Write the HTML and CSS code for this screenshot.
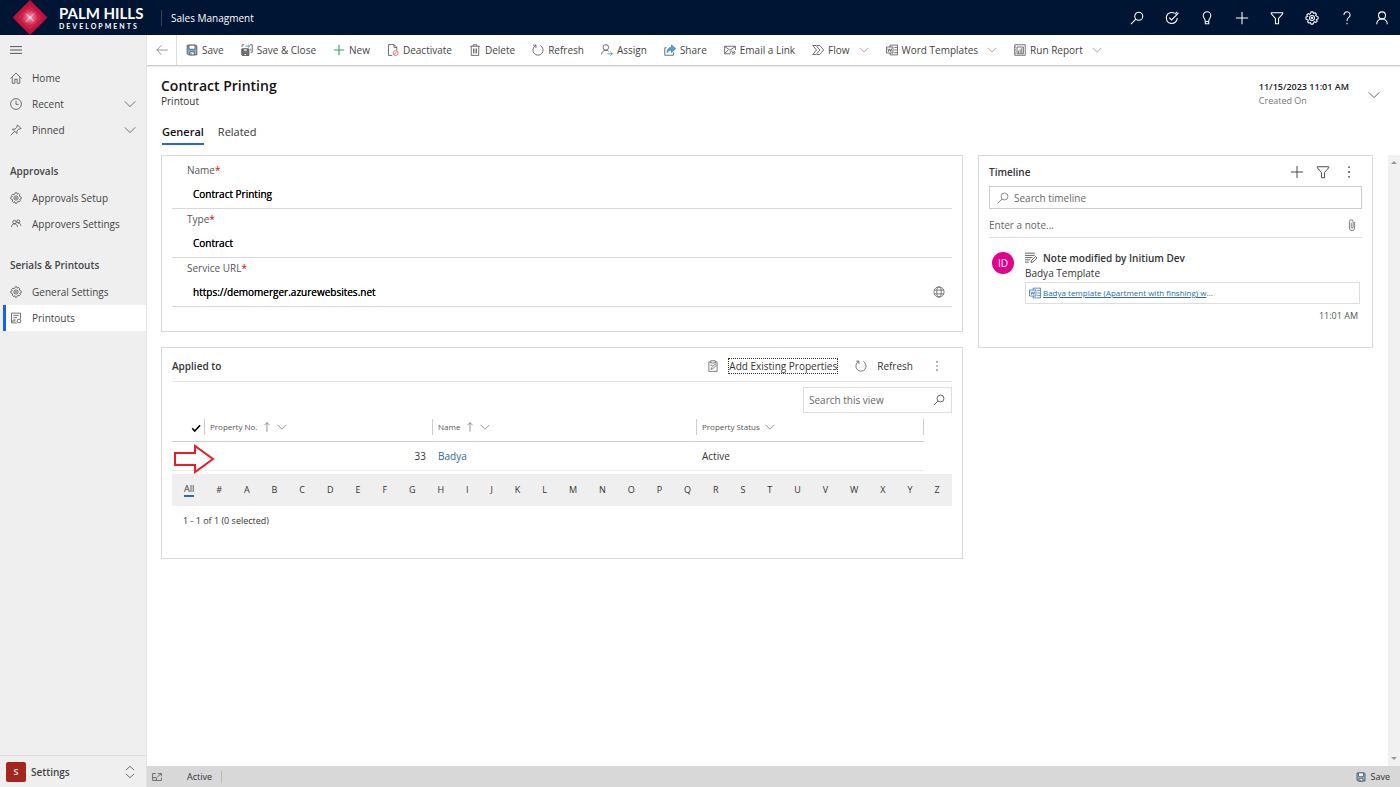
FILE: index.html
```html
<!DOCTYPE html>
<html lang="en">

<head>
    <meta charset="UTF-8">
    <meta name="viewport" content="width=device-width, initial-scale=1.0">
    <title>Contract Printing - Sales Managment</title>
    <link rel="stylesheet" href="styles.css">
</head>

<body>
    <!-- Shared icons -->
    <svg class="sprite" aria-hidden="true">
        <symbol id="i-search" viewBox="0 0 16 16"><circle cx="10" cy="6" r="4.6"/><path d="M6.7 9.3 1 15"/></symbol>
        <symbol id="i-target" viewBox="0 0 16 16"><path d="M11 2.600A6.300 6.300 0 1 0 14 8"/><path d="M4.800 7.500 7.500 10.200 14.500 3.200M11.500 3.500 14 1M12.500 5 15.500 2"/></symbol>
        <symbol id="i-bulb" viewBox="0 0 16 16"><path d="M6 11.500C6 9 3.700 8 3.700 5.200a4.300 4.300 0 0 1 8.600 0C12.300 8 10 9 10 11.500v3H6zM6 12h4"/></symbol>
        <symbol id="i-plus" viewBox="0 0 16 16"><path d="M8 1v14M1 8h14"/></symbol>
        <symbol id="i-filter" viewBox="0 0 16 16"><path d="M1.500 2h13v1.200L9.800 8.500v6H6.200v-6L1.500 3.200z"/></symbol>
        <symbol id="i-gear" viewBox="0 0 16 16"><path d="M6.300 2.900 7 1h2l.7 1.900 1.800-.9 1.500 1.500-.8 1.800L15 7v2l-2 .7.900 1.800-1.500 1.500-1.800-.8L9 15H7l-.7-2-1.800.9L3 12.400l.8-1.800L1 9V7l2-.7-.9-1.800L3.600 3l1.800.8z"/><circle cx="8" cy="8" r="2.800"/><circle cx="8" cy="8" r=".7"/></symbol>
        <symbol id="i-help" viewBox="0 0 16 16"><path d="M4.500 4.500A3.500 3.500 0 1 1 10 7.300C8.600 8.300 8 9 8 11.500M8 13.500V15"/></symbol>
        <symbol id="i-user" viewBox="0 0 16 16"><circle cx="8" cy="5" r="4"/><path d="M2 15c0-3.500 2.500-6 6-6s6 2.500 6 6"/></symbol>
        <symbol id="i-menu" viewBox="0 0 16 16"><path d="M0 3.500h16M0 8h16M0 12.500h16"/></symbol>
        <symbol id="i-home" viewBox="0 0 16 16"><path d="M.8 8.500 8 1.500l7.200 7M3 7v8h3.500V9.500h3V15H13V7"/></symbol>
        <symbol id="i-clock" viewBox="0 0 16 16"><circle cx="8" cy="8" r="7.200"/><path d="M8 3.500v5h3.500"/></symbol>
        <symbol id="i-pin" viewBox="0 0 16 16"><path d="M10 1.200 14.800 6l-3.300 1-2.300 2.300v3.500L3.200 6.800h3.500L9 4.500zM6 10l-5 5"/></symbol>
        <symbol id="i-people" viewBox="0 0 16 16"><circle cx="6" cy="5.500" r="2.300"/><circle cx="11" cy="4.500" r="2"/><path d="M2 12c0-2.500 1.700-4.200 4-4.200S10 9.500 10 12M10.500 6.500c2.500 0 3.800 1.500 4 4"/></symbol>
        <symbol id="i-printout" viewBox="0 0 16 16"><path d="M9 14.500H2v-13h12V9M4.500 4.500h7M4.500 7.500h5M4.500 10.500h3M2 12h5"/><circle cx="12" cy="12" r="2.500"/></symbol>
        <symbol id="i-down" viewBox="0 0 16 16"><path d="m1 4.500 7 7 7-7"/></symbol>
        <symbol id="i-updown" viewBox="0 0 16 16"><path d="M2.500 5.500 8 .5l5.500 5M2.500 10.500l5.500 5 5.500-5"/></symbol>
        <symbol id="i-back" viewBox="0 0 16 16"><path d="M15.500 8H1M7.500 1.500 1 8l6.500 6.500"/></symbol>
        <symbol id="i-save" viewBox="0 0 16 16"><path fill="#7fb2dc" d="M2 1.500h11.500l1 1v12H3l-1.500-1.500V1.500z"/><path fill="#fff" d="M4 1.500h8v5.500H4zM5 10.500h6v4H5z"/><path d="M7 12.500v2"/></symbol>
        <symbol id="i-saveclose" viewBox="0 0 16 16"><path fill="#777" d="M1 6.500h9.500v9H2.300L1 14.200z"/><path fill="#fff" d="M3 6.500h5.500v3H3zM4 12.500h3.500v3H4z"/><path d="M1.500 4V1H4M12 1h3v10h-2.500"/><path class="blue" d="M6 2.800h5.500M9.500 1l2 1.800-2 1.900M13 6v3"/></symbol>
        <symbol id="i-deactivate" viewBox="0 0 16 16"><path d="M7 15.300H2V.8h7.500L13 4.300v4M9.300.8v3.700H13"/><circle class="red" cx="11.500" cy="12" r="3.300"/><path class="red" d="m9.300 14.200 4.400-4.400"/></symbol>
        <symbol id="i-trash" viewBox="0 0 16 16"><path d="M1.500 3h13M5.500 3V1h5v2M3 3v12.200h10V3M6 6v6.500M8 6v6.500M10 6v6.500"/></symbol>
        <symbol id="i-refresh" viewBox="0 0 16 16"><path d="M5 2A6.800 6.800 0 1 0 11 2M1.500 1.500H5.300V5.500"/></symbol>
        <symbol id="i-assign" viewBox="0 0 16 16"><circle cx="6.500" cy="4.500" r="3.700"/><path d="M.8 14c0-3.200 2.300-5.600 5.700-5.600 1.600 0 2.800.5 3.700 1.300"/><path class="blue" d="M8.500 13H15M12.500 10.500 15.200 13l-2.700 2.500"/></symbol>
        <symbol id="i-share" viewBox="0 0 16 16"><path d="M3.500 5H1v10h11.500v-4"/><path fill="#5b9fdc" class="blue" d="M4 11.500C4 7 6.500 4.500 10 4.500V1.200l5.500 5-5.500 5V8C7.500 8 5.500 9 4 11.500z"/></symbol>
        <symbol id="i-mail" viewBox="0 0 16 16"><path d="M8 13H.8V3h14.400v5M1 3.300l7 5 7-5M1 12.800l4.500-5"/><path d="M9.500 13a2 2 0 0 1 0-3.500h2M12.500 9.500a2 2 0 0 1 0 4h-1.500M10.500 11.500h3"/></symbol>
        <symbol id="i-flow" viewBox="0 0 16 16"><path d="M1 2h4.500l5 6-5 6H1l5-6zM6.500 2h4l5 6-5 6h-4"/></symbol>
        <symbol id="i-word" viewBox="0 0 16 16"><path d="M5.500 4V1.500h10v13h-10V12M11 4.500h4.500M11 8h4.500M11 11.500h4.500"/><path d="M.7 4h8.600v8H.7zM2.500 6l1 4L5 6.500 6.500 10l1-4"/></symbol>
        <symbol id="i-report" viewBox="0 0 16 16"><path d="M4 1h11v14H1V1zM4 4v9h8.500V4zM6 12V9M8.200 12V7M10.400 12V5.500M1 4h1.500M1 8h1.500M1 12h1.500"/></symbol>
        <symbol id="i-globe" viewBox="0 0 16 16"><circle cx="8" cy="8" r="6.800"/><ellipse cx="8" cy="8" rx="3" ry="6.800"/><path d="M1.700 5.500h12.600M1.700 10.500h12.600"/></symbol>
        <symbol id="i-clip" viewBox="0 0 16 16"><path d="M11.500 4v8a3.500 3.500 0 0 1-7 0V3.500a2.500 2.500 0 0 1 5 0V11a1.300 1.300 0 0 1-2.600 0V5"/></symbol>
        <symbol id="i-note" viewBox="0 0 16 16"><path d="M0 1.500h13M0 4.500h13M0 7.500h10M0 10.500h7M0 13.500h5M8 14l.7-2.700L14 6l2 2-5.300 5.300z"/></symbol>
        <symbol id="i-dots" viewBox="0 0 16 16"><path stroke-width="1.500" d="M7 2.500h2M7 8h2M7 13.500h2"/></symbol>
        <symbol id="i-add" viewBox="0 0 16 16"><path d="M5 2.500H2.500v12.700h11V2.500H11M5 1h6v3H5zM5.500 12.500l.5-2.200L11 5.500l1.500 1.500-5 5zM4.500 7h3"/></symbol>
        <symbol id="i-check" viewBox="0 0 16 16"><path d="m2 8.500 4 4.500L14.500 3.500"/></symbol>
        <symbol id="i-up" viewBox="0 0 16 16"><path d="M8 15.500V1M4 5l4-4 4 4"/></symbol>
        <symbol id="i-popout" viewBox="0 0 16 16"><path d="M6 2.500H1v11h14V9M1 9h6v4.500M9 2.500h6V7M15 2.500 8.500 8"/></symbol>
    </svg>

    <header class="topbar">
        <a class="brand" href="#">
            <svg class="brand-mark" viewBox="0 0 36 36" aria-hidden="true">
                <defs>
                    <radialGradient id="glow">
                        <stop offset="0" stop-color="#fff"/>
                        <stop offset=".12" stop-color="#e77b93"/>
                        <stop offset=".45" stop-color="#cf1843"/>
                        <stop offset="1" stop-color="#a80f34"/>
                    </radialGradient>
                </defs>
                <path fill="url(#glow)" d="M18 0 36 18 18 36 0 18z"/>
                <path fill="none" stroke="#fff" stroke-opacity=".35" stroke-width=".7" stroke-dasharray="1 1" d="M18 7 29 18 18 29 7 18zM18 10l8 8-8 8-8-8zM18 13l5 5-5 5-5-5z"/>
                <path stroke="#fff" stroke-width=".7" d="m14 14 8 8M22 14l-8 8"/>
            </svg>
            <span class="brand-text">
                <span class="brand-name">PALM HILLS</span>
                <span class="brand-sub">DEVELOPMENTS</span>
            </span>
        </a>
        <span class="app-name">Sales Managment</span>
        <div class="top-actions">
            <button type="button" aria-label="Search"><svg class="icon"><use href="#i-search"/></svg></button>
            <button type="button" aria-label="Assistant"><svg class="icon"><use href="#i-target"/></svg></button>
            <button type="button" aria-label="Insights"><svg class="icon"><use href="#i-bulb"/></svg></button>
            <button type="button" aria-label="Quick create"><svg class="icon"><use href="#i-plus"/></svg></button>
            <button type="button" aria-label="Advanced find"><svg class="icon"><use href="#i-filter"/></svg></button>
            <button type="button" aria-label="Settings"><svg class="icon"><use href="#i-gear"/></svg></button>
            <button type="button" aria-label="Help"><svg class="icon"><use href="#i-help"/></svg></button>
            <button type="button" aria-label="Account"><svg class="icon"><use href="#i-user"/></svg></button>
        </div>
    </header>

    <div class="shell">
        <nav class="sidebar">
            <button type="button" class="menu-btn" aria-label="Toggle navigation"><svg class="icon"><use href="#i-menu"/></svg></button>
            <a class="nav-item" href="#"><svg class="icon"><use href="#i-home"/></svg>Home</a>
            <a class="nav-item" href="#"><svg class="icon"><use href="#i-clock"/></svg>Recent<svg class="icon nav-arrow"><use href="#i-down"/></svg></a>
            <a class="nav-item" href="#"><svg class="icon"><use href="#i-pin"/></svg>Pinned<svg class="icon nav-arrow"><use href="#i-down"/></svg></a>

            <h3 class="nav-title">Approvals</h3>
            <a class="nav-item" href="#"><svg class="icon"><use href="#i-gear"/></svg>Approvals Setup</a>
            <a class="nav-item" href="#"><svg class="icon"><use href="#i-people"/></svg>Approvers Settings</a>

            <h3 class="nav-title">Serials &amp; Printouts</h3>
            <a class="nav-item" href="#"><svg class="icon"><use href="#i-gear"/></svg>General Settings</a>
            <a class="nav-item active" href="#"><svg class="icon"><use href="#i-printout"/></svg>Printouts</a>

            <button type="button" class="area-switch">
                <span class="area-badge">S</span>Settings
                <svg class="icon nav-arrow"><use href="#i-updown"/></svg>
            </button>
        </nav>

        <div class="page">
            <div class="commands">
                <button type="button" class="back-btn" aria-label="Back"><svg class="icon"><use href="#i-back"/></svg></button>
                <div class="command-list">
                    <button type="button"><svg class="icon"><use href="#i-save"/></svg>Save</button>
                    <button type="button"><svg class="icon"><use href="#i-saveclose"/></svg>Save &amp; Close</button>
                    <button type="button"><svg class="icon green"><use href="#i-plus"/></svg>New</button>
                    <button type="button"><svg class="icon"><use href="#i-deactivate"/></svg>Deactivate</button>
                    <button type="button"><svg class="icon"><use href="#i-trash"/></svg>Delete</button>
                    <button type="button"><svg class="icon"><use href="#i-refresh"/></svg>Refresh</button>
                    <button type="button"><svg class="icon"><use href="#i-assign"/></svg>Assign</button>
                    <button type="button"><svg class="icon"><use href="#i-share"/></svg>Share</button>
                    <button type="button"><svg class="icon"><use href="#i-mail"/></svg>Email a Link</button>
                    <button type="button"><svg class="icon"><use href="#i-flow"/></svg>Flow<svg class="icon arrow"><use href="#i-down"/></svg></button>
                    <button type="button"><svg class="icon"><use href="#i-word"/></svg>Word Templates<svg class="icon arrow"><use href="#i-down"/></svg></button>
                    <button type="button"><svg class="icon"><use href="#i-report"/></svg>Run Report<svg class="icon arrow"><use href="#i-down"/></svg></button>
                </div>
            </div>

            <div class="record-header">
                <div>
                    <h1>Contract Printing</h1>
                    <div class="entity">Printout</div>
                </div>
                <div class="created">
                    <div class="created-value">11/15/2023 11:01 AM</div>
                    <div class="created-label">Created On</div>
                </div>
                <button type="button" class="expand-btn" aria-label="More header fields"><svg class="icon"><use href="#i-down"/></svg></button>
            </div>
            <div class="tabs" role="tablist">
                <button type="button" role="tab" aria-selected="true" class="tab selected">General</button>
                <button type="button" role="tab" aria-selected="false" class="tab">Related</button>
            </div>

            <div class="scroll-area">
                <main class="form">
                    <div class="column">
                        <section class="card fields">
                            <div class="field">
                                <label for="name">Name<span class="required">*</span></label>
                                <input type="text" id="name" value="Contract Printing">
                            </div>
                            <div class="field">
                                <label for="type">Type<span class="required">*</span></label>
                                <input type="text" id="type" value="Contract">
                            </div>
                            <div class="field">
                                <label for="url">Service URL<span class="required">*</span></label>
                                <div class="url-row">
                                    <input type="url" id="url" value="https://demomerger.azurewebsites.net">
                                    <svg class="icon"><use href="#i-globe"/></svg>
                                </div>
                            </div>
                        </section>

                        <section class="card applied">
                            <div class="applied-head">
                                <h2>Applied to</h2>
                                <button type="button" class="add-btn"><svg class="icon"><use href="#i-add"/></svg><span>Add Existing Properties</span></button>
                                <button type="button"><svg class="icon"><use href="#i-refresh"/></svg>Refresh</button>
                                <button type="button" aria-label="More commands"><svg class="icon"><use href="#i-dots"/></svg></button>
                            </div>
                            <div class="view-search">
                                <input type="text" placeholder="Search this view" aria-label="Search this view">
                                <svg class="icon"><use href="#i-search"/></svg>
                            </div>
                            <div class="grid-wrap">
                                <table>
                                    <thead>
                                        <tr>
                                            <th class="col-check"><svg class="icon"><use href="#i-check"/></svg></th>
                                            <th class="col-no"><span class="th">Property No.<svg class="icon"><use href="#i-up"/></svg><svg class="icon"><use href="#i-down"/></svg></span></th>
                                            <th class="col-name"><span class="th">Name<svg class="icon"><use href="#i-up"/></svg><svg class="icon"><use href="#i-down"/></svg></span></th>
                                            <th class="col-status"><span class="th last">Property Status<svg class="icon"><use href="#i-down"/></svg></span></th>
                                        </tr>
                                    </thead>
                                    <tbody>
                                        <tr>
                                            <td></td>
                                            <td class="number">33</td>
                                            <td><a href="#">Badya</a></td>
                                            <td>Active</td>
                                        </tr>
                                    </tbody>
                                </table>
                                <svg class="pointer" viewBox="0 0 42 30" aria-hidden="true"><path d="M2 9h20V2l18 13-18 13v-7H2z"/></svg>
                            </div>
                            <div class="jump-bar">
                                <button type="button" class="current">All</button>
                                <button type="button">#</button>
                                <button type="button">A</button>
                                <button type="button">B</button>
                                <button type="button">C</button>
                                <button type="button">D</button>
                                <button type="button">E</button>
                                <button type="button">F</button>
                                <button type="button">G</button>
                                <button type="button">H</button>
                                <button type="button">I</button>
                                <button type="button">J</button>
                                <button type="button">K</button>
                                <button type="button">L</button>
                                <button type="button">M</button>
                                <button type="button">N</button>
                                <button type="button">O</button>
                                <button type="button">P</button>
                                <button type="button">Q</button>
                                <button type="button">R</button>
                                <button type="button">S</button>
                                <button type="button">T</button>
                                <button type="button">U</button>
                                <button type="button">V</button>
                                <button type="button">W</button>
                                <button type="button">X</button>
                                <button type="button">Y</button>
                                <button type="button">Z</button>
                            </div>
                            <div class="paging">1 - 1 of 1 (0 selected)</div>
                        </section>
                    </div>

                    <section class="card timeline">
                        <div class="timeline-head">
                            <h2>Timeline</h2>
                            <button type="button" aria-label="Create record"><svg class="icon"><use href="#i-plus"/></svg></button>
                            <button type="button" aria-label="Filter"><svg class="icon"><use href="#i-filter"/></svg></button>
                            <button type="button" aria-label="More"><svg class="icon"><use href="#i-dots"/></svg></button>
                        </div>
                        <div class="timeline-search">
                            <svg class="icon"><use href="#i-search"/></svg>
                            <input type="text" placeholder="Search timeline" aria-label="Search timeline">
                        </div>
                        <div class="note-entry">
                            <input type="text" placeholder="Enter a note..." aria-label="Enter a note">
                            <svg class="icon"><use href="#i-clip"/></svg>
                        </div>
                        <article class="note">
                            <span class="avatar">ID</span>
                            <div class="note-body">
                                <div class="note-title"><svg class="icon"><use href="#i-note"/></svg>Note modified by Initium Dev</div>
                                <div class="note-text">Badya Template</div>
                                <div class="attachment"><svg class="icon"><use href="#i-word"/></svg><span><a href="#">Badya template (Apartment with finshing) w</a>...</span></div>
                                <div class="note-time">11:01 AM</div>
                            </div>
                        </article>
                    </section>
                </main>
                <div class="scrollbar"><i class="to-top"></i><i class="to-bottom"></i></div>
            </div>

            <footer class="statusbar">
                <button type="button" aria-label="Open in new window"><svg class="icon"><use href="#i-popout"/></svg></button>
                <span class="state">Active</span>
                <button type="button" class="footer-save"><svg class="icon"><use href="#i-save"/></svg>Save</button>
            </footer>
        </div>
    </div>
</body>

</html>
```
FILE: styles.css
```css
* {
    box-sizing: border-box;
}

body {
    margin: 0;
    min-height: 100vh;
    display: flex;
    flex-direction: column;
    font-family: "Open Sans", "Noto Sans", sans-serif;
    font-size: 10px;
    line-height: 16px;
    color: #333;
    background-color: #fff;
}

h1,
h2,
h3 {
    margin: 0;
    font-size: 10px;
    font-weight: 600;
}

a {
    color: inherit;
    text-decoration: none;
}

button,
input {
    font: inherit;
    color: inherit;
    background: none;
    border: none;
    padding: 0;
    min-width: 0;
}

button {
    display: flex;
    align-items: center;
    cursor: pointer;
    white-space: nowrap;
}

input {
    outline: none;
}

input::placeholder {
    color: #666;
    opacity: 1;
}

.sprite {
    display: none;
}

.icon {
    width: 12px;
    height: 12px;
    flex: none;
    fill: none;
    stroke: currentColor;
    stroke-width: 1;
}

.blue {
    stroke: #2b7cd3;
}

.red {
    stroke: #e8484f;
}

.green {
    color: #2fa866;
    stroke-width: 1.5;
}

/* Top bar */
.topbar {
    height: 35px;
    display: flex;
    align-items: center;
    background-color: #001433;
    color: #fff;
}

.brand {
    display: flex;
    align-items: center;
    gap: 11px;
    padding-left: 12px;
    width: 161px;
}

.brand-mark {
    width: 36px;
    height: 35px;
}

.brand-text {
    display: flex;
    flex-direction: column;
    font-family: Lato, sans-serif;
    font-weight: 700;
}

.brand-name {
    font-size: 15px;
    line-height: 17px;
}

.brand-sub {
    font-size: 7px;
    line-height: 9px;
    letter-spacing: 2px;
}

.app-name {
    border-left: 1px solid #33445f;
    padding-left: 9px;
}

.top-actions {
    display: flex;
    gap: 21px;
    margin-left: auto;
    padding-right: 11px;
}

.top-actions .icon {
    width: 14px;
    height: 14px;
    stroke-width: 1.2;
}

/* Layout */
.shell {
    flex: 1;
    display: flex;
}

.sidebar {
    width: 147px;
    flex: none;
    display: flex;
    flex-direction: column;
    background-color: #efefef;
    border-right: 1px solid #e4e4e4;
    color: #444;
}

.menu-btn {
    height: 30px;
    padding-left: 10px;
    color: #222;
}

.nav-item {
    display: flex;
    align-items: center;
    gap: 10px;
    height: 26px;
    padding: 0 10px;
    white-space: nowrap;
}

.nav-arrow {
    margin-left: auto;
}

.nav-title {
    height: 26px;
    line-height: 26px;
    margin: 15px 0 1px;
    padding-left: 10px;
}

.nav-item.active {
    background-color: #fff;
    box-shadow: inset 3px 0 #efefef, inset 6px 0 #0f62fe;
}

.area-switch {
    margin-top: auto;
    height: 32px;
    padding: 0 10px 0 6px;
    gap: 5px;
    border-top: 1px solid #dcdcdc;
    font-weight: 600;
}

.area-badge {
    width: 20px;
    height: 20px;
    line-height: 20px;
    border-radius: 2px;
    background-color: #a4261d;
    color: #fff;
    font-size: 9px;
}

.page {
    flex: 1;
    min-width: 0;
    display: flex;
    flex-direction: column;
}

/* Command bar */
.commands {
    height: 31px;
    display: flex;
    border-bottom: 1px solid #ccc;
    box-shadow: 0 1px 1px #eee;
    color: #444;
}

.back-btn {
    width: 30px;
    justify-content: center;
    border-right: 1px solid #ddd;
    color: #777;
}

.command-list {
    display: flex;
    gap: 17px;
    padding-left: 9px;
}

.command-list button {
    gap: 4px;
}

.command-list .arrow {
    width: 10px;
    height: 10px;
    margin-left: 5px;
    color: #777;
}

/* Record header */
.record-header {
    display: flex;
    align-items: center;
    padding: 10px 20px 0 14px;
}

h1 {
    font-size: 14px;
    line-height: 18px;
    color: #111;
}

.entity {
    line-height: 12px;
}

.created {
    margin-left: auto;
    padding-top: 4px;
    font-size: 9px;
    line-height: 14px;
}

.created-value {
    font-weight: 600;
    color: #222;
}

.created-label {
    color: #777;
}

.expand-btn {
    margin-left: 19px;
    padding-top: 5px;
}

.tabs {
    display: flex;
    gap: 14px;
    padding: 15px 15px 0;
    margin-bottom: 10px;
    font-size: 11px;
}

.tab {
    height: 22px;
    padding-bottom: 2px;
    border-bottom: 2px solid transparent;
}

.tab.selected {
    font-weight: 600;
    color: #111;
    border-bottom-color: #2266e3;
}

/* Form */
.scroll-area {
    flex: 1;
    display: flex;
}

.form {
    flex: 1;
    display: grid;
    grid-template-columns: 67fr 33fr;
    gap: 15px;
    align-items: start;
    padding: 0 15px 0 14px;
}

.column {
    display: grid;
    gap: 15px;
    min-width: 0;
}

.card {
    border: 1px solid #d8d8d8;
    min-width: 0;
}

.scrollbar {
    width: 12px;
    display: flex;
    flex-direction: column;
    align-items: center;
    justify-content: space-between;
    padding: 6px 0;
    background-color: #f1f1f1;
}

.to-top,
.to-bottom {
    border: 3px solid transparent;
}

.to-top {
    border-top-width: 0;
    border-bottom-color: #999;
}

.to-bottom {
    border-bottom-width: 0;
    border-top-color: #999;
}

.fields {
    padding: 4px 10px 24px;
}

.field {
    display: flex;
    flex-direction: column;
    height: 49px;
    padding-left: 15px;
    border-bottom: 1px solid #d8d8d8;
}

.field label {
    line-height: 20px;
    color: #555;
}

.required {
    color: #e00000;
}

.field input {
    flex: 1;
    padding-left: 6px;
    color: #000;
    text-shadow: 0 0 0 #000;
}

.url-row {
    flex: 1;
    display: flex;
    align-items: center;
    padding-right: 7px;
    color: #555;
}

/* Sub-grid */
.applied {
    padding: 0 10px 29px;
}

.applied-head {
    display: flex;
    align-items: center;
    height: 34px;
    gap: 18px;
    padding: 2px 9px 0 0;
    border-bottom: 1px solid #e4e4e4;
}

.applied-head h2 {
    margin-right: auto;
}

.applied-head button {
    gap: 10px;
}

.applied-head .icon {
    color: #555;
}

.add-btn span {
    line-height: 14px;
    outline: 1px dotted #333;
}

.view-search {
    display: flex;
    align-items: center;
    width: 149px;
    height: 26px;
    margin: 5px 0 0 auto;
    padding: 0 6px 0 5px;
    border: 1px solid #ddd;
}

.view-search input {
    flex: 1;
}

.grid-wrap {
    position: relative;
}

table {
    width: calc(100% - 28px);
    table-layout: fixed;
    border-collapse: collapse;
}

th {
    height: 28px;
    padding: 0;
    border-bottom: 1px solid #ccc;
    font-size: 8px;
    font-weight: 400;
    text-align: left;
    color: #555;
}

td {
    height: 29px;
    padding: 0 6px;
    border-bottom: 1px solid #eee;
}

td a {
    color: #2b6a9e;
}

.col-check {
    width: 32px;
    text-align: right;
    color: #000;
}

.col-check .icon {
    width: 10px;
    height: 10px;
    margin-right: 3px;
    stroke-width: 2.500;
    vertical-align: middle;
}

.col-no {
    width: 228px;
}

.col-status {
    width: 228px;
}

.th {
    display: flex;
    align-items: center;
    gap: 5px;
    padding-left: 5px;
    border-left: 1px solid #ccc;
}

.th.last {
    border-right: 1px solid #ccc;
}

.th .icon {
    width: 10px;
    height: 10px;
}

.number {
    text-align: right;
}

/* Red marker over the first row */
.pointer {
    position: absolute;
    left: 1px;
    top: 31px;
    width: 42px;
    height: 30px;
    fill: none;
    stroke: #ec1c24;
    stroke-width: 2;
}

.jump-bar {
    display: flex;
    align-items: center;
    justify-content: space-between;
    height: 32px;
    margin-top: 3px;
    padding: 1px 12px 0;
    background-color: #efefef;
    font-size: 9px;
    line-height: 12px;
}

.jump-bar .current {
    border-bottom: 2px solid #2b6cb0;
}

.paging {
    padding: 7px 11px 0;
    font-size: 9px;
}

/* Timeline */
.timeline {
    padding: 0 10px 23px;
}

.timeline-head {
    display: flex;
    align-items: center;
    gap: 12px;
    height: 30px;
    padding: 2px 6px 0 0;
}

.timeline-head .icon {
    width: 14px;
    height: 14px;
}

.timeline-head h2 {
    margin-right: auto;
}

.timeline-search {
    display: flex;
    align-items: center;
    gap: 5px;
    height: 23px;
    padding: 0 7px;
    border: 1px solid #ccc;
    color: #666;
}

.timeline-search input,
.note-entry input {
    flex: 1;
}

.note-entry {
    display: flex;
    align-items: center;
    height: 29px;
    padding-right: 4px;
    padding-top: 4px;
    border-bottom: 1px solid #ddd;
    color: #555;
}

.note {
    display: flex;
    gap: 11px;
    padding: 12px 2px 0 3px;
}

.avatar {
    width: 22px;
    height: 22px;
    line-height: 22px;
    margin-top: 2px;
    border-radius: 50%;
    background-color: #e3008c;
    color: #fff;
    text-align: center;
}

.note-body {
    flex: 1;
    min-width: 0;
}

.note-title {
    display: flex;
    align-items: center;
    gap: 6px;
    font-weight: 600;
}

.note-text {
    line-height: 14px;
}

.attachment {
    display: flex;
    align-items: center;
    gap: 2px;
    height: 22px;
    margin-top: 2px;
    padding-left: 3px;
    border: 1px solid #ddd;
    font-size: 8px;
    color: #2b6cb0;
}

.attachment a {
    text-decoration: underline;
}

.note-time {
    margin-top: 4px;
    padding-right: 2px;
    font-size: 9px;
    text-align: right;
    color: #555;
}

/* Footer */
.statusbar {
    display: flex;
    align-items: center;
    height: 21px;
    padding: 0 10px 0 5px;
    background-color: #d8d8d8;
    font-size: 9px;
}

.statusbar .icon {
    width: 10px;
    height: 10px;
}

.state {
    margin-left: 25px;
    padding-right: 9px;
    line-height: 12px;
    border-right: 1px solid #bbb;
}

.footer-save {
    margin-left: auto;
    gap: 5px;
}
```
